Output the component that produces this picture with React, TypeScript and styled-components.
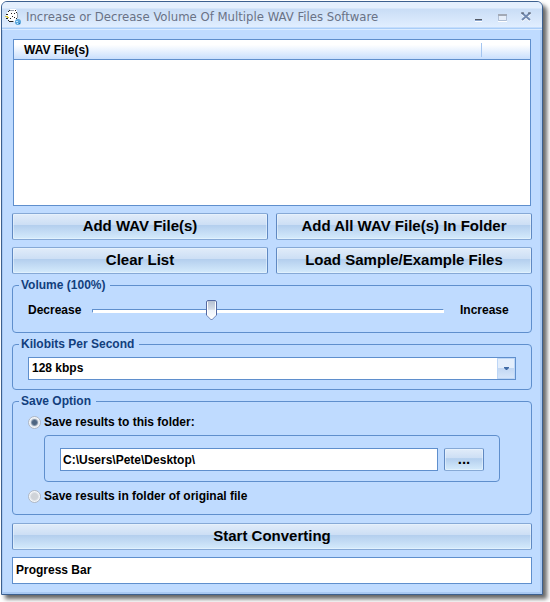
import React, { useState } from "react";
import styled, { createGlobalStyle, css } from "styled-components";

const line = "#5f8fcd";
const face = "#bfdbff";

const thumb = `url("data:image/svg+xml,%3Csvg xmlns='http://www.w3.org/2000/svg' width='11' height='21'%3E%3Cdefs%3E%3ClinearGradient id='g' x2='0' y2='1'%3E%3Cstop stop-color='%23b4bfd0'/%3E%3Cstop offset='.45' stop-color='%23d5dde8'/%3E%3Cstop offset='.5' stop-color='%23eef3fa'/%3E%3Cstop offset='1' stop-color='%23fff'/%3E%3C/linearGradient%3E%3C/defs%3E%3Cpath d='M1.5.5h8l1 1v13.500l-5 5-5-5V1.500z' fill='url(%23g)' stroke='%235468a0'/%3E%3Cpath d='M1.500 2v13l4 4 4-4V2' fill='none' stroke='%23fff'/%3E%3C/svg%3E")`;

const GlobalStyle = createGlobalStyle`
  * { box-sizing: border-box; }
  body {
    margin: 0;
    background: #fff;
    color: #000;
    font: bold 12px/15px "Liberation Sans", Arial, sans-serif;
  }
  button, input, select { font: inherit; color: inherit; margin: 0; }
`;

const Window = styled.main`
  margin: 1px 7px 7px 1px;
  border: 1px solid #3c608f;
  border-radius: 6px 6px 0 0;
  background: ${face};
  box-shadow: inset -2px -2px 0 #a9c9f3, inset 1px 0 0 #a9c9f3, 4px 4px 4px rgba(0, 0, 0, 0.6);
`;

const TitleBar = styled.header`
  display: flex;
  align-items: center;
  height: 28px;
  padding: 2px 8px 0 3px;
  border-bottom: 1px solid #dcecff;
  border-radius: 5px 5px 0 0;
  background: linear-gradient(#e4effd 0 6px, #c9ddf6 7px, #e1eeff 25px, #a9cdf8 26px);
`;

const Title = styled.h1`
  flex: 1;
  margin: 0 0 0 5px;
  color: #697286;
  font: 13px/18px "DejaVu Sans Condensed", Tahoma, sans-serif;
  white-space: nowrap;
`;

const Controls = styled.div`
  display: flex;
  gap: 8px;
`;

const ControlButton = styled.button`
  display: block;
  width: 16px;
  height: 18px;
  padding: 0;
  border: 0;
  background: none;
  svg { display: block; }
`;

const Content = styled.div`
  padding: 9px 10px 10px;
`;

const FileList = styled.div`
  height: 167px;
  margin: 0 1px;
  border: 1px solid ${line};
  background: #fff;
`;

const FileTable = styled.table`
  width: 100%;
  border-collapse: collapse;
`;

const HeadCell = styled.th<{ $narrow?: boolean }>`
  width: ${(p) => (p.$narrow ? "49px" : "auto")};
  height: 19px;
  padding: 3px 0 0 10px;
  border-bottom: 1px solid ${line};
  background: linear-gradient(#fff 0 25%, #c9dffd);
  text-align: left;
  ${(p) => p.$narrow && css`
    background: linear-gradient(#a4c5f0, #a4c5f0) 0 3px / 1px 14px no-repeat,
      linear-gradient(#fff 0 25%, #c9dffd);
  `}
`;

const ButtonGrid = styled.div`
  display: grid;
  grid-template-columns: 1fr 1fr;
  gap: 7px 8px;
  margin: 7px 0 4px;
`;

const Button = styled.button<{ $full?: boolean }>`
  width: ${(p) => (p.$full ? "100%" : "auto")};
  height: 27px;
  padding: 0 0 1px;
  border: 1px solid;
  border-color: #86a9d6 #6089c2 #86a9d6 #6089c2;
  border-radius: 2px;
  background: linear-gradient(#e1ecf9, #cddff5 42%, #b4cfee 46%, #d5ebfc);
  box-shadow: inset 0 0 0 1px rgba(235, 245, 255, 0.55);
  font-size: 15px;
  line-height: 18px;
`;

const BrowseButton = styled(Button)`
  width: 40px;
  height: 23px;
`;

const Group = styled.fieldset<{ $bottom: number }>`
  min-width: 0;
  margin: 0 0 4px;
  padding: 0 15px ${(p) => p.$bottom}px;
  border: 1px solid ${line};
  border-radius: 4px;
`;

const Legend = styled.legend`
  margin-left: -9px;
  padding: 0 5px 0 2px;
  color: #123f7d;
`;

const SliderRow = styled.div`
  display: grid;
  grid-template-columns: 64px 1fr 72px;
  align-items: center;
  height: 21px;
  margin-top: 7px;
`;

const IncreaseLabel = styled.span`
  padding-left: 16px;
`;

const Slider = styled.input`
  appearance: none;
  display: block;
  width: 100%;
  height: 21px;
  background: none;
  &::-webkit-slider-runnable-track {
    height: 4px;
    border: 1px solid;
    border-color: ${line} #fff #fff ${line};
    background: #fff;
  }
  &::-webkit-slider-thumb {
    appearance: none;
    width: 11px;
    height: 21px;
    margin-top: -10px;
    background: ${thumb};
  }
`;

const SelectBox = styled.div`
  display: grid;
  grid-template-columns: 1fr 18px;
  height: 23px;
  margin-top: 5px;
  border: 1px solid ${line};
  background: #fff;
`;

const Select = styled.select`
  grid-area: 1 / 1 / 2 / 3;
  appearance: none;
  padding: 0 20px 0 3px;
  border: 0;
  background: none;
`;

const SelectArrow = styled.span`
  grid-area: 1 / 2;
  display: flex;
  align-items: center;
  justify-content: center;
  border: 1px solid #bdd6f6;
  background: linear-gradient(#e3eefc 0 45%, #c3d8f3 50%, #d5e5fa);
  pointer-events: none;
`;

const Option = styled.label<{ $first?: boolean }>`
  display: flex;
  align-items: center;
  gap: 3px;
  height: 15px;
  margin-top: ${(p) => (p.$first ? "6px" : "7px")};
`;

const Radio = styled.input`
  appearance: none;
  width: 13px;
  height: 13px;
  border: 1px solid #b0b8c4;
  border-radius: 50%;
  background: radial-gradient(circle, #cfd3d8 0 3px, #dde1e6 4px, #f4f7fa 5px);
  &:checked {
    background: radial-gradient(circle, #4e6682 0 2px, #8495aa 3px, #dfe5ec 4px, #f4f7fa 5px);
  }
`;

const FolderPanel = styled.div`
  display: flex;
  gap: 6px;
  margin: 5px 16px 0;
  padding: 12px 15px 10px;
  border: 1px solid ${line};
  border-radius: 4px;
`;

const PathInput = styled.input`
  flex: 1;
  min-width: 0;
  height: 23px;
  padding: 0 2px;
  border: 1px solid ${line};
  border-radius: 0;
  background: #fff;
`;

const Finish = styled.div`
  margin-top: 8px;
`;

const Progress = styled.div`
  display: flex;
  align-items: center;
  height: 27px;
  margin-top: 7px;
  padding: 0 3px;
  border: 1px solid ${line};
  background: #fff;
`;

const AppIcon = () => (
  <svg width="16" height="16" viewBox="0 0 16 16" shapeRendering="crispEdges" aria-hidden="true">
    <path d="M3 2 5 0h5l2 2v9l-3 2H5l-2-2-2-4z" fill="#fff" />
    <path d="M3 2h1M4 1h1M10 1h1M11 3h1M12 5h1M12 7h1M11 9h1M1 5h2M1 9h2M3 11h1M4 12h4M6 4h1M9 4h1M7 7h1M9 8h1M5 9h1" fill="none" stroke="#222" />
    <path d="M5 1h4M12 4v5M8 12h1" fill="none" stroke="#9aa3ae" />
    <path d="M0 7h3M2 8h2" fill="none" stroke="#dccb3c" />
    <circle cx="13" cy="13" r="3" fill="#5ba7dc" shapeRendering="auto" />
    <path d="M11 12h2M12 14h1" stroke="#c6ecff" />
    <path d="M14 14h1" stroke="#24679f" />
  </svg>
);

export default function App() {
  const [volume, setVolume] = useState(100);
  const [folder, setFolder] = useState("C:\\Users\\Pete\\Desktop\\");
  const [target, setTarget] = useState("folder");

  return (
    <>
      <GlobalStyle />
      <Window>
        <TitleBar>
          <AppIcon />
          <Title>Increase or Decrease Volume Of Multiple WAV Files Software</Title>
          <Controls>
            <ControlButton aria-label="Minimize">
              <svg width="16" height="18">
                <path d="M5 11h7v2H5z" fill="#8ca4c8" />
                <path d="M5 11h7v1H5z" fill="#545a66" />
                <path d="M5 13h7v1H5z" fill="#fff" />
              </svg>
            </ControlButton>
            <ControlButton aria-label="Maximize">
              <svg width="16" height="18">
                <path d="M4.500 6.500h8v6h-8z" fill="#e6eef9" stroke="#b0bfd5" />
                <path d="M4 6h9v2H4z" fill="#a2a9b5" />
                <path d="M4 13h9v1H4z" fill="#fff" />
              </svg>
            </ControlButton>
            <ControlButton aria-label="Close">
              <svg width="16" height="18">
                <path d="m4 6 8 7m0-7-8 7" stroke="#fff" strokeWidth="2" />
                <path d="m4 5 8 7m0-7-8 7" stroke="#7189af" strokeWidth="2" />
                <path d="M3 5h3M10 5h3" stroke="#545a66" />
              </svg>
            </ControlButton>
          </Controls>
        </TitleBar>
        <Content>
          <FileList>
            <FileTable>
              <thead>
                <tr>
                  <HeadCell scope="col">WAV File(s)</HeadCell>
                  <HeadCell $narrow aria-hidden="true" />
                </tr>
              </thead>
            </FileTable>
          </FileList>
          <ButtonGrid>
            <Button>Add WAV File(s)</Button>
            <Button>Add All WAV File(s) In Folder</Button>
            <Button>Clear List</Button>
            <Button>Load Sample/Example Files</Button>
          </ButtonGrid>
          <Group $bottom={11}>
            <Legend>Volume ({volume}%)</Legend>
            <SliderRow>
              <label htmlFor="volume">Decrease</label>
              <Slider
                id="volume"
                type="range"
                min={0}
                max={300}
                value={volume}
                onChange={(e) => setVolume(Number(e.target.value))}
              />
              <IncreaseLabel>Increase</IncreaseLabel>
            </SliderRow>
          </Group>
          <Group $bottom={9}>
            <Legend id="bitrate">Kilobits Per Second</Legend>
            <SelectBox>
              <Select aria-labelledby="bitrate">
                <option>128 kbps</option>
              </Select>
              <SelectArrow>
                <svg width="5" height="3" aria-hidden="true">
                  <path d="M0 0h5v1L3 3H2L0 1z" fill="#426ca6" />
                </svg>
              </SelectArrow>
            </SelectBox>
          </Group>
          <Group $bottom={10}>
            <Legend>Save Option</Legend>
            <Option $first>
              <Radio type="radio" name="target" checked={target === "folder"} onChange={() => setTarget("folder")} />
              Save results to this folder:
            </Option>
            <FolderPanel>
              <PathInput aria-label="Folder" value={folder} onChange={(e) => setFolder(e.target.value)} />
              <BrowseButton aria-label="Browse">...</BrowseButton>
            </FolderPanel>
            <Option>
              <Radio type="radio" name="target" checked={target === "original"} onChange={() => setTarget("original")} />
              Save results in folder of original file
            </Option>
          </Group>
          <Finish>
            <Button $full>Start Converting</Button>
            <Progress>Progress Bar</Progress>
          </Finish>
        </Content>
      </Window>
    </>
  );
}
